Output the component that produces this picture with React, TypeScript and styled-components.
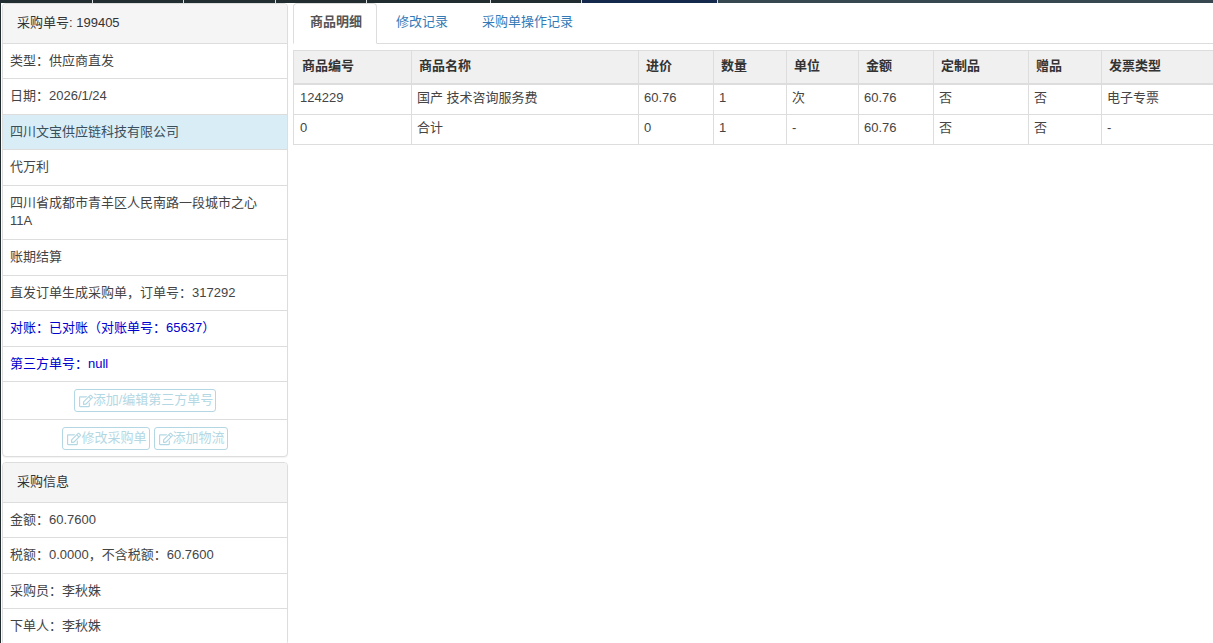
import React from 'react';
import styled, { createGlobalStyle } from 'styled-components';
import { FaRegEdit } from 'react-icons/fa';

const GlobalStyle = createGlobalStyle`
  html, body {
    margin: 0;
    padding: 0;
    background: #fff;
    overflow: hidden;
  }
  body {
    font-family: "Liberation Sans", "Noto Sans CJK SC", sans-serif;
    font-size: 13px;
    line-height: 1.42857;
    color: #444;
  }
  * {
    box-sizing: border-box;
  }
`;

const TOP_SEGMENTS = [
  { width: 92, color: '#222d32' },
  { width: 91, color: '#222d32' },
  { width: 92, color: '#222d32' },
  { width: 91, color: '#222d32' },
  { width: 124, color: '#222d32' },
  { width: 91, color: '#222d32' },
  { width: 136, color: '#14294b' },
];

const goodsColumns = [
  { title: '商品编号', width: 118 },
  { title: '商品名称', width: 227 },
  { title: '进价', width: 75 },
  { title: '数量', width: 73 },
  { title: '单位', width: 72 },
  { title: '金额', width: 75 },
  { title: '定制品', width: 95 },
  { title: '赠品', width: 73 },
  { title: '发票类型', width: 125 },
];

const goodsRows = [
  ['124229', '国产 技术咨询服务费', '60.76', '1', '次', '60.76', '否', '否', '电子专票'],
  ['0', '合计', '0', '1', '-', '60.76', '否', '否', '-'],
];

const Page = styled.div`
  height: 643px;
  overflow: hidden;
  display: flex;
  flex-direction: column;
  border-left: 1px solid #222d32;
`;

const TopStrip = styled.div`
  display: flex;
  height: 3px;
  flex: none;
  background: #374850;
`;

const TopSegment = styled.div<{ $width: number; $color: string }>`
  width: ${(p) => p.$width}px;
  background: ${(p) => p.$color};
  border-right: 1px solid #d8dcde;
`;

const Main = styled.div`
  display: flex;
  gap: 5px;
  padding: 0 0 0 1px;
  flex: 1;
  min-height: 0;
`;

const SideColumn = styled.div`
  width: 286px;
  flex: none;
  display: flex;
  flex-direction: column;
  gap: 5px;
`;

const Panel = styled.div`
  background: #fff;
  border: 1px solid #ddd;
  border-radius: 4px;
  box-shadow: 0 1px 1px rgba(0, 0, 0, 0.05);
  overflow: hidden;
  flex: none;
`;

const PanelHeader = styled.div`
  padding: 9.5px 14px 10.5px;
  background: #f5f5f5;
  border-bottom: 1px solid #ddd;
  color: #333;
`;

const ListRow = styled.div<{ $tone?: 'info' | 'link' }>`
  padding: 8px 15px 8px 7px;
  border-bottom: 1px solid #ddd;
  background: ${(p) => (p.$tone === 'info' ? '#d9edf7' : '#fff')};
  color: ${(p) => (p.$tone === 'link' ? '#0000cd' : p.$tone === 'info' ? '#3a4f5c' : '#444')};

  &:last-child {
    border-bottom: none;
  }
`;

const ActionRow = styled.div`
  display: flex;
  justify-content: center;
  gap: 4px;
  padding: 7px 8px;
  border-bottom: 1px solid #ddd;

  &:last-child {
    border-bottom: none;
    padding-bottom: 6px;
  }
`;

const GhostButton = styled.button`
  display: inline-flex;
  align-items: center;
  height: 23px;
  padding: 0 2px 0 4px;
  background: #fff;
  border: 1px solid #b4d8e3;
  border-radius: 3px;
  color: #b4d8e3;
  font: inherit;
  svg {
    width: 14px;
    height: 14px;
  }
`;

const ContentColumn = styled.div`
  flex: 1;
  min-width: 0;
`;

const Tabs = styled.div`
  display: flex;
  height: 41px;
  border-bottom: 1px solid #ddd;
`;

const Tab = styled.div<{ $active?: boolean }>`
  height: 41px;
  padding: 9px 14px 0 16px;
  margin-right: 2px;
  border: 1px solid ${(p) => (p.$active ? '#ddd' : 'transparent')};
  border-bottom-color: ${(p) => (p.$active ? '#fff' : 'transparent')};
  border-radius: 4px 4px 0 0;
  background: ${(p) => (p.$active ? '#fff' : 'transparent')};
  color: ${(p) => (p.$active ? '#555' : '#337ab7')};
  font-weight: ${(p) => (p.$active ? 700 : 400)};
`;

const TableWrap = styled.div`
  margin-top: 6px;
  overflow: hidden;
`;

const GoodsTable = styled.table`
  width: 933px;
  table-layout: fixed;
  border-collapse: collapse;
`;

const HeadCell = styled.th<{ $width: number }>`
  width: ${(p) => p.$width}px;
  padding: 6px 7px 7px;
  background: #f0f0f0;
  border: 1px solid #ddd;
  border-bottom-width: 2px;
  color: #333;
  font-weight: 700;
  text-align: left;

  &:first-child {
    padding-left: 8px;
  }
`;

const BodyCell = styled.td`
  padding: 4px 5px 6px;
  border: 1px solid #ddd;

  tr:first-child & {
    padding-bottom: 7px;
  }

  &:first-child {
    padding-left: 6px;
  }
`;

const App = () => {
  return (
    <Page>
      <GlobalStyle />
      <TopStrip>
        {TOP_SEGMENTS.map((segment, index) => (
          <TopSegment key={index} $width={segment.width} $color={segment.color} />
        ))}
      </TopStrip>
      <Main>
        <SideColumn>
          <Panel>
            <PanelHeader>采购单号: 199405</PanelHeader>
            <ListRow>类型：供应商直发</ListRow>
            <ListRow>日期：2026/1/24</ListRow>
            <ListRow $tone="info">四川文宝供应链科技有限公司</ListRow>
            <ListRow>代万利</ListRow>
            <ListRow>四川省成都市青羊区人民南路一段城市之心11A</ListRow>
            <ListRow>账期结算</ListRow>
            <ListRow>直发订单生成采购单，订单号：317292</ListRow>
            <ListRow $tone="link">对账：已对账（对账单号：65637）</ListRow>
            <ListRow $tone="link">第三方单号：null</ListRow>
            <ActionRow>
              <GhostButton>
                <FaRegEdit />
                添加/编辑第三方单号
              </GhostButton>
            </ActionRow>
            <ActionRow>
              <GhostButton>
                <FaRegEdit />
                修改采购单
              </GhostButton>
              <GhostButton>
                <FaRegEdit />
                添加物流
              </GhostButton>
            </ActionRow>
          </Panel>
          <Panel>
            <PanelHeader>采购信息</PanelHeader>
            <ListRow>金额：60.7600</ListRow>
            <ListRow>税额：0.0000，不含税额：60.7600</ListRow>
            <ListRow>采购员：李秋姝</ListRow>
            <ListRow>下单人：李秋姝</ListRow>
          </Panel>
        </SideColumn>
        <ContentColumn>
          <Tabs>
            <Tab $active>商品明细</Tab>
            <Tab>修改记录</Tab>
            <Tab>采购单操作记录</Tab>
          </Tabs>
          <TableWrap>
            <GoodsTable>
              <thead>
                <tr>
                  {goodsColumns.map((column) => (
                    <HeadCell key={column.title} $width={column.width}>
                      {column.title}
                    </HeadCell>
                  ))}
                </tr>
              </thead>
              <tbody>
                {goodsRows.map((row, rowIndex) => (
                  <tr key={rowIndex}>
                    {row.map((value, cellIndex) => (
                      <BodyCell key={cellIndex}>{value}</BodyCell>
                    ))}
                  </tr>
                ))}
              </tbody>
            </GoodsTable>
          </TableWrap>
        </ContentColumn>
      </Main>
    </Page>
  );
};

export default App;
